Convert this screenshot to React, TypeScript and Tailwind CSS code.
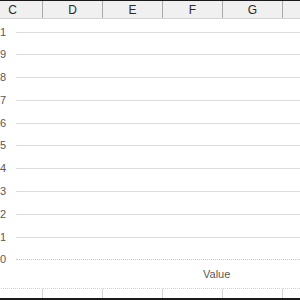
import React from 'react';

const columns = ['C', 'D', 'E', 'F', 'G', ''];
const ticks = ['1', '0.9', '0.8', '0.7', '0.6', '0.5', '0.4', '0.3', '0.2', '0.1', '0'];

export default function App() {
  return (
    <div
      className="w-[300px] h-[300px] overflow-hidden bg-white flex flex-col"
      style={{ fontFamily: '"Liberation Sans", Arial, sans-serif' }}
    >
      <div className="h-px bg-[#1a1a1a]" />

      {/* column headers */}
      <div className="h-[18px] bg-[#f0f0f0] border-b border-[#d4d4d4] flex ml-[-17px] shrink-0">
        {columns.map((c, i) => (
          <div
            key={i}
            className="w-[60px] shrink-0 border-r border-[#ababab] flex items-center justify-center text-[12px] text-[#2b2b2b]"
          >
            {c}
          </div>
        ))}
      </div>

      {/* chart */}
      <div className="flex-1 flex flex-col pt-[13px]">
        <div className="h-[228px] flex flex-col justify-between">
          {ticks.map((t, i) => (
            <div key={t} className="h-0 flex items-center">
              <div className="w-[6px] flex justify-end shrink-0 text-[11px] leading-[13px] text-[#595959] whitespace-nowrap">
                {t}
              </div>
              <div
                className={
                  i === ticks.length - 1
                    ? 'ml-[10px] flex-1 border-t border-dotted border-[#c8c8c8]'
                    : 'ml-[10px] flex-1 border-t border-[#dcdcdc]'
                }
              />
            </div>
          ))}
        </div>
        <div className="flex-1 flex items-center pl-[203px] text-[11px] text-[#595959]">
          Value
        </div>
      </div>

      {/* bottom cell row */}
      <div className="h-[10px] border-t border-dotted border-[#d0d0d0] flex ml-[-17px] shrink-0">
        {columns.map((c, i) => (
          <div key={i} className="w-[60px] shrink-0 border-r border-[#d4d4d4]" />
        ))}
      </div>
      <div className="h-[2px] bg-[#1a1a1a] shrink-0" />
    </div>
  );
}
